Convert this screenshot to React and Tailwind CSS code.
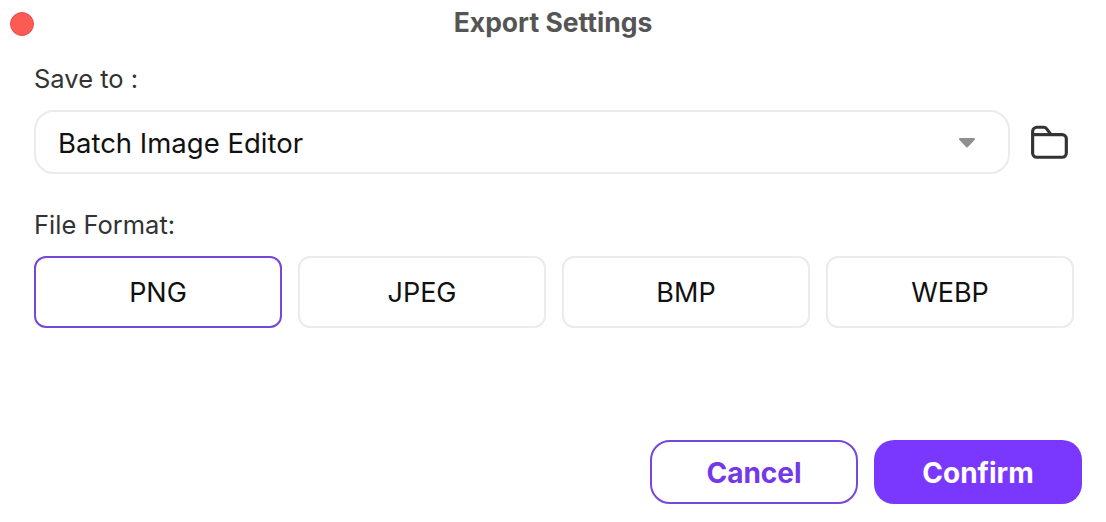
const formats = ["PNG", "JPEG", "BMP", "WEBP"];

function FolderIcon() {
  return (
    <svg width="40" height="36" viewBox="0 0 38 34" fill="none" stroke="#333333" strokeWidth="3" strokeLinejoin="round">
      <path d="M2.5 7a4 4 0 0 1 4-4H13c1.2 0 2 .4 2.7 1.3L20 10h10.5a4 4 0 0 1 4 4v13.5a4 4 0 0 1-4 4h-24a4 4 0 0 1-4-4V7Z" />
      <path d="M2.5 10H20" />
    </svg>
  );
}

function Caret() {
  return (
    <svg width="18" height="11" viewBox="0 0 18 11" fill="#8f8f8f" stroke="#8f8f8f" strokeWidth="2" strokeLinejoin="round">
      <path d="M2 2h14l-7 7.5L2 2Z" />
    </svg>
  );
}

export default function App() {
  return (
    <div className="flex h-[522px] w-[1106px] flex-col bg-white font-['Inter',sans-serif]">
      <div className="relative flex h-[46px] shrink-0 items-center justify-center">
        <span className="absolute left-[10px] top-[12px] size-6 rounded-full border border-[#e8504a] bg-[#fc5a55]" />
        <h1 className="text-[26.5px] font-bold text-[#555555]">Export Settings</h1>
      </div>

      <div className="flex flex-1 flex-col pl-[34px] pr-[32px]">
        <label className="mt-[16px] text-[25.5px] leading-[34px] text-[#333333]">Save to :</label>
        <div className="mt-[14px] flex items-center">
          <div className="flex h-16 w-[976px] items-center justify-between rounded-[20px] border-2 border-[#ebebeb] pl-[22px] pr-[32px]">
            <span className="pt-[3px] text-[27.5px] text-[#111111]">Batch Image Editor</span>
            <Caret />
          </div>
          <button className="ml-[20px]">
            <FolderIcon />
          </button>
        </div>

        <label className="mt-[34px] text-[25.5px] leading-[34px] text-[#333333]">File Format:</label>
        <div className="mt-[14px] flex gap-4">
          {formats.map((f, i) => (
            <button
              key={f}
              className={
                i === 0
                  ? "h-[72px] w-[248px] rounded-xl border-2 border-[#7747d8] pt-[2px] text-[27px] text-[#111111]"
                  : "h-[72px] w-[248px] rounded-xl border-2 border-[#ebebeb] pt-[2px] text-[27px] text-[#111111]"
              }
            >
              {f}
            </button>
          ))}
        </div>

        <div className="-mr-2 mt-[112px] flex justify-end gap-4">
          <button className="h-16 w-[208px] rounded-[20px] border-2 border-[#7747d8] pt-[2px] text-[28px] font-bold text-[#7338ea]">
            Cancel
          </button>
          <button className="h-16 w-[208px] rounded-[20px] bg-[#7a38ff] pt-[2px] text-[28px] font-bold text-white">
            Confirm
          </button>
        </div>
      </div>
    </div>
  );
}
